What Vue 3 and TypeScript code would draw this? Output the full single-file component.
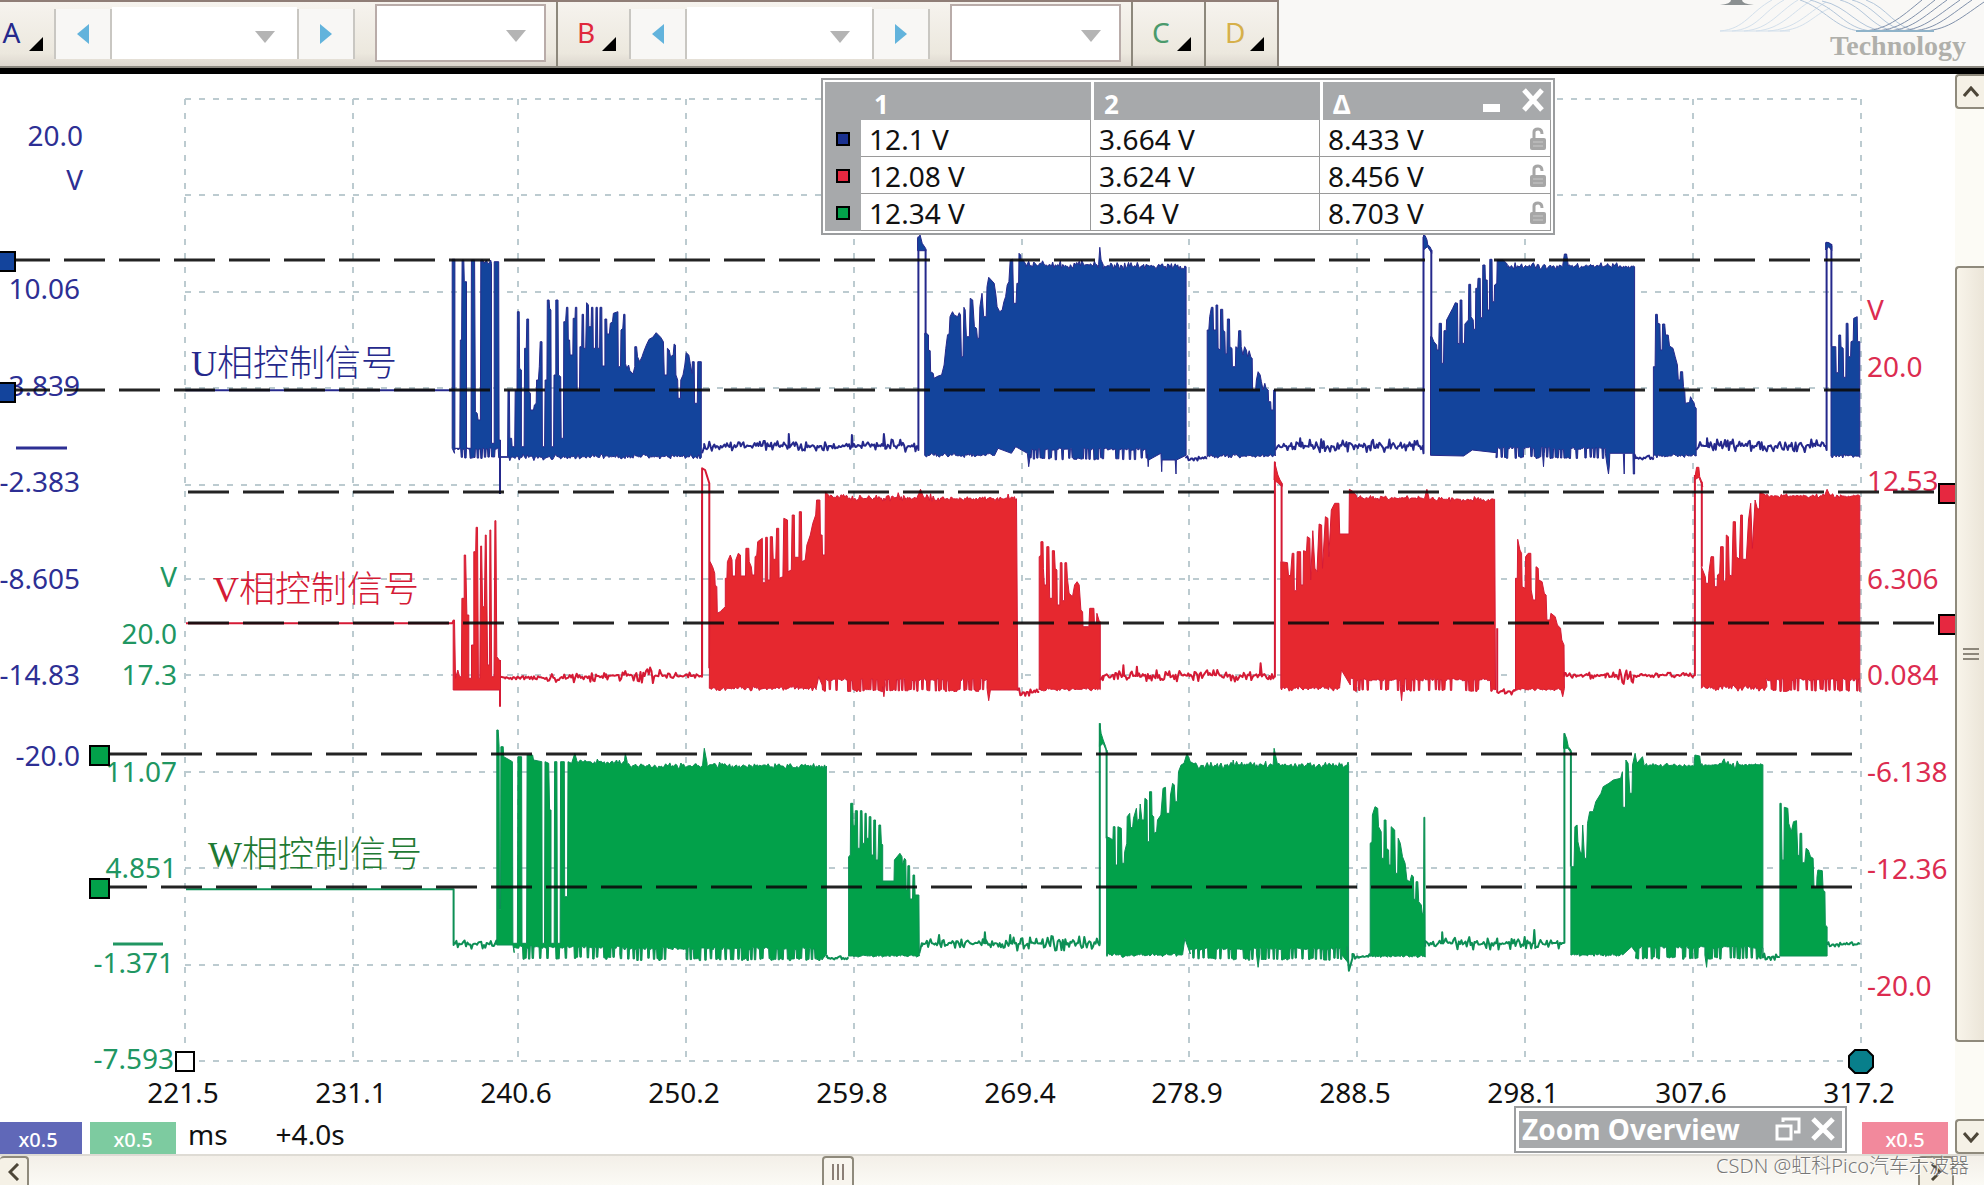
<script setup lang="ts">
type Frame = { x: number; y: number; k: number }
type Piece = { frame: Frame; pts: string; line?: boolean }
type Channel = { name: string; color: string; edge: string; pieces: Piece[] }

/* Capture windows: origin on the plot and horizontal samples per plot unit.
   Vertical resolution is 3 samples per unit in every window. */
const early: Frame = { x: 0, y: 220, k: 2.24 }
const earlyLow: Frame = { x: 0, y: 500, k: 2.178 }
const mid: Frame = { x: 700, y: 220, k: 2.376 }
const midLow: Frame = { x: 700, y: 700, k: 2.376 }
const late: Frame = { x: 1300, y: 220, k: 2.292 }
const lateLow: Frame = { x: 1300, y: 700, k: 2.292 }

function rng(seed: number): () => number {
  let s = seed
  return () => {
    s = (s * 16807) % 2147483647
    return s / 2147483647
  }
}

/* "x,y" is a plain vertex; "x,y,a" is a noisy run up to x, around y, with amplitude a. */
function toPath(piece: Piece): string {
  const { frame, pts, line } = piece
  const out: string[] = []
  const rand = rng(pts.length * 7919 + 13)
  const put = (px: number, py: number) => {
    const x = Math.round((frame.x + px / frame.k) * 10) / 10
    const y = Math.round((frame.y + py / 3) * 10) / 10
    out.push(`${x} ${y}`)
  }
  let lastX = 0
  for (const token of pts.trim().split(/\s+/)) {
    const [x, y, amp] = token.split(',').map(Number)
    if (amp === undefined) {
      put(x, y)
    } else {
      const dir = x > lastX ? 1 : -1
      const step = amp >= 15 ? 4 : 3
      let high = false
      for (let cx = lastX; dir * (x - cx) > 0; cx += dir * step) {
        if (amp >= 15) {
          if (rand() > 0.45) high = !high
          const py = y + (high ? -amp : amp) * (0.7 + rand() * 0.4)
          put(cx, py)
          put(cx + dir * (step - 1), py)
        } else {
          const r = rand() * 2 - 1
          put(cx, y + r * Math.abs(r) * amp * 1.7)
        }
      }
      put(x, y)
    }
    lastX = x
  }
  return 'M' + out.join('L') + (line ? '' : 'Z')
}

const channels: Channel[] = [
  {
    name: 'U', color: '#13449c', edge: '#25298c',
    pieces: [
      { frame: early, line: true, pts: '415,511 1015,511' },
      { frame: early, line: true, pts: '1120,660 1120,822' },
      { frame: early, pts: '1013,685 1013,118 1019,118 1019,685 1030,685 1031,360 1034,360 1035,120 1039,120 1040,185 1045,185 1045,685 1055,685 1056,120 1063,120 1065,575 1069,580 1071,600 1076,600 1077,120 1082,120 1084,130 1090,120 1092,130 1096,130 1099,120 1101,130 1101,670 1107,670 1107,125 1117,125 1118,660 1121,660 1121,710 1137,710 1138,512 1141,512 1142,655 1146,655 1147,680 1153,680 1154,512 1158,512 1159,275 1163,275 1164,445 1168,450 1168,680 1174,680 1175,385 1179,385 1180,297 1184,297 1185,515 1188,520 1188,570 1195,570 1197,555 1201,550 1202,480 1206,480 1208,440 1210,365 1214,365 1215,680 1220,680 1221,480 1225,480 1226,240 1230,240 1231,265 1234,270 1235,680 1240,680 1241,465 1245,465 1245,240 1250,240 1251,465 1256,470 1257,655 1262,655 1263,305 1267,305 1269,262 1272,262 1273,360 1276,360 1277,405 1283,405 1284,295 1288,295 1289,262 1292,262 1293,510 1298,510 1299,380 1303,380 1304,283 1307,283 1308,385 1312,385 1314,248 1318,255 1319,320 1324,320 1325,262 1328,262 1329,385 1334,385 1335,262 1338,262 1339,385 1343,385 1344,262 1348,262 1349,438 1355,438 1355,297 1359,297 1360,342 1365,342 1367,310 1372,305 1374,280 1384,275 1385,440 1390,440 1391,330 1395,325 1397,283 1400,283 1401,430 1404,445 1408,435 1411,452 1418,462 1422,440 1422,380 1426,380 1428,410 1433,425 1438,410 1442,395 1448,375 1454,358 1462,352 1470,338 1480,352 1486,365 1488,465 1494,465 1495,385 1499,390 1502,410 1508,405 1510,372 1513,375 1514,465 1518,480 1519,535 1524,535 1525,480 1530,465 1534,435 1537,398 1543,405 1546,430 1550,460 1551,425 1555,425 1556,550 1562,550 1563,425 1571,425 1571,708 1265,710,5 1140,712,6 1120,712 1018,700,15' },
      { frame: mid, line: true, pts: '5,700 10,680 210,678,9 211,642 213,678 360,678,8 361,645 363,680 435,678,8 437,642 440,680 518,678,13 519,690 519,50' },
      { frame: mid, pts: '517,92 517,55 523,45 528,70 536,85 537,92' },
      { frame: mid, line: true, pts: '536,88 536,345' },
      { frame: mid, pts: '534,706 534,340 538,340 543,345 543,390 547,392 548,455 554,460 556,475 566,468 574,465 580,435 584,385 588,345 592,340 594,290 600,275 604,285 612,290 616,278 619,285 621,410 625,410 627,262 630,270 633,350 640,350 642,235 648,240 652,320 657,325 659,355 663,355 665,260 670,220 674,290 680,290 682,200 686,172 692,180 699,190 703,225 706,260 712,275 718,270 722,245 726,230 730,195 734,185 737,120 743,118 745,250 751,250 753,190 757,190 758,100 762,105 763,120 768,120 775,135 947,134,8 950,82 953,120 958,134 1152,138,7 1155,140 1155,706 1132,720 1131,762 1129,720 1098,720 1097,755 1095,700 1066,720 1065,740 1063,702 785,702,16 781,740 778,700 750,680 740,700 708,685 700,706 534,706,4' },
      { frame: mid, line: true, pts: '1155,715 1205,715,4' },
      { frame: mid, pts: '1205,710 1205,330 1209,330 1211,290 1215,262 1219,262 1220,330 1226,330 1226,255 1230,255 1231,385 1236,390 1237,268 1242,268 1243,330 1247,335 1248,400 1252,402 1253,297 1258,297 1259,380 1264,385 1265,440 1272,440 1273,380 1278,385 1280,332 1285,332 1286,380 1290,405 1294,380 1298,390 1301,410 1305,392 1309,412 1312,415 1313,508 1320,510 1322,480 1326,455 1331,465 1334,485 1338,510 1342,490 1345,505 1350,510 1351,545 1356,545 1357,570 1362,570 1363,510 1367,510 1367,708 1205,708,4' },
      { frame: mid, line: true, pts: '1367,690 1372,680 1424,678,9 1426,655 1428,680 1717,678,12 1719,700 1719,50' },
      { frame: late, pts: '283,90 283,45 287,47 291,60 293,75 298,80 302,92 302,100 292,80' },
      { frame: late, line: true, pts: '301,90 301,360' },
      { frame: late, pts: '299,706 299,350 302,350 307,365 313,375 314,390 318,390 319,310 324,310 325,430 329,430 330,332 335,332 336,300 342,285 350,265 356,248 361,250 362,370 366,372 367,240 371,240 372,370 377,370 378,312 386,300 387,193 391,193 392,290 397,300 398,328 402,328 403,205 407,205 408,175 413,175 414,293 418,293 419,135 424,135 425,180 429,180 430,270 434,270 435,118 440,118 441,245 445,245 446,195 451,190 452,120 466,120 475,132 602,137,7 606,102 611,102 615,137 764,138,6 767,140 767,762 764,762 763,700 744,700 743,762 741,700 710,700 709,738 707,762 704,738 700,700 560,700,16 558,740 556,705 450,698,16 395,690 375,708 299,706' },
      { frame: late, line: true, pts: '767,718 810,712,6' },
      { frame: late, pts: '810,710 810,440 814,440 815,283 819,283 820,310 825,312 826,390 830,390 831,312 836,312 838,345 844,345 847,378 855,385 860,410 865,435 867,480 871,480 872,455 877,455 879,500 882,515 883,550 890,548 893,545 895,530 899,540 903,548 905,560 908,565 908,708 810,708,4' },
      { frame: late, line: true, pts: '908,690 914,680 932,678,9 933,655 935,680 1205,678,12 1207,690 1207,68 1218,75 1218,380' },
      { frame: late, pts: '1205,90 1205,68 1213,68 1219,78 1219,92 1212,80' },
      { frame: late, pts: '1217,708 1217,380 1228,380 1229,458 1234,458 1235,345 1239,345 1240,380 1245,385 1246,472 1251,472 1252,310 1256,310 1257,410 1262,410 1263,365 1268,362 1269,295 1277,290 1278,365 1283,365 1283,710 1217,708,4' },
    ],
  },
  {
    name: 'V', color: '#e6282f', edge: '#d51a35',
    pieces: [
      { frame: earlyLow, line: true, pts: '405,370 985,370 988,362' },
      { frame: earlyLow, line: true, pts: '1089,480 1089,620' },
      { frame: earlyLow, pts: '987,570 987,360 990,360 992,535 997,510 1001,530 1005,530 1006,295 1011,295 1011,165 1014,165 1017,345 1021,345 1021,535 1027,535 1027,435 1032,435 1032,155 1036,155 1037,82 1040,82 1042,535 1045,535 1047,138 1049,138 1051,320 1055,320 1057,105 1059,105 1062,495 1066,495 1067,90 1069,90 1071,530 1076,530 1078,62 1080,62 1082,470 1090,485 1090,570' },
      { frame: earlyLow, line: true, pts: '1090,530 1100,533 1190,533,3 1320,532,9 1460,526,14 1528,528,6 1529,530 1529,0' },
      { frame: mid, line: true, pts: '5,1365 5,745 12,750 22,790 22,1345' },
      { frame: mid, pts: '22,1405 24,1025 30,1040 35,1060 36,1095 40,1100 41,1180 48,1175 56,1165 60,1160 60,1075 64,1075 65,1025 72,1005 76,1020 77,1068 84,1068 85,1020 91,1000 96,1005 97,1068 108,1068 109,985 116,985 117,1025 122,1040 124,1065 130,1065 131,1010 135,1005 137,965 148,955 149,1088 155,1088 156,952 160,952 161,1080 166,1080 167,950 172,950 174,1018 180,1018 182,925 187,925 188,1075 197,1070 199,895 208,900 209,1055 217,1050 219,885 224,885 225,1012 235,1012 236,875 241,875 242,1025 250,1020 254,975 262,945 268,910 275,885 277,840 285,840 286,945 290,945 291,1005 297,1005 298,815 305,825 350,828,5 468,834,6 471,818 475,834 515,834,6 520,820 524,808 530,828 575,834,8 730,836,4 732,822 735,836 752,836,4 755,1410 690,1410 686,1442 682,1405 440,1395,18 437,1430 434,1400 290,1395,18 282,1370 276,1405 24,1405,5' },
      { frame: mid, line: true, pts: '755,1412 806,1416,7' },
      { frame: mid, pts: '806,1410 806,1010 810,1005 810,965 815,965 816,1045 818,1095 823,1095 824,980 829,980 831,1135 837,1135 837,992 842,992 844,1045 848,1050 849,1155 855,1155 856,1028 860,1028 861,1142 866,1142 867,1028 871,1028 873,1075 877,1120 885,1130 890,1095 896,1085 901,1095 905,1170 909,1175 910,1220 924,1220 926,1165 936,1165 937,1210 942,1210 943,1180 949,1205 951,1205 951,1408 806,1408,3' },
      { frame: mid, line: true, pts: '951,1380 957,1368 1004,1366,9 1006,1336 1008,1368 1036,1368,9 1038,1340 1040,1368 1330,1366,11 1332,1330 1335,1368 1365,1368,6 1366,1370 1366,725' },
      { frame: mid, pts: '1364,780 1365,725 1368,740 1373,765 1378,780 1383,790 1383,800 1374,790' },
      { frame: mid, line: true, pts: '1382,790 1382,1025' },
      { frame: mid, pts: '1380,1405 1380,1025 1396,1028 1398,1065 1403,1068 1407,1000 1411,1000 1412,1112 1417,1112 1419,995 1427,995 1428,1095 1433,1095 1434,992 1441,995 1443,950 1449,955 1451,1080 1456,932 1461,1045 1466,1055 1471,912 1477,915 1479,1045 1486,890 1492,895 1494,1010 1500,870 1508,850 1518,850 1520,942 1542,942 1543,808 1552,815 1560,828 1722,834,5 1727,808 1732,834 1888,838,5 1890,1410 1670,1395,18 1667,1442 1664,1400 1545,1395,18 1524,1350 1520,1400 1380,1405,5' },
      { frame: late, line: true, pts: '452,1225 452,1412 494,1414,6' },
      { frame: late, pts: '494,1410 494,1075 498,1075 499,958 504,990 508,1000 509,1100 516,1105 517,1010 523,1000 529,1000 530,1110 534,1140 540,1140 541,1040 546,1045 547,1080 555,1085 560,1120 564,1125 566,1200 573,1200 575,1180 585,1190 590,1215 597,1225 600,1260 605,1275 606,1405 602,1430 598,1408 494,1408,3' },
      { frame: late, line: true, pts: '606,1370 700,1366,6 765,1370,14 905,1366,5 905,765' },
      { frame: late, pts: '904,780 906,765 909,742 914,742 916,770 920,782 923,800 914,772' },
      { frame: late, line: true, pts: '921,785 921,1040' },
      { frame: late, pts: '920,1405 920,1040 929,1070 930,1090 936,1090 937,1060 942,1010 948,1010 950,1100 956,1100 957,1065 962,1060 964,980 970,980 971,1085 976,1080 977,945 982,950 984,1065 990,1068 993,905 998,905 1000,1010 1007,1018 1010,885 1014,885 1015,1018 1023,1018 1028,900 1033,850 1037,985 1043,840 1048,865 1053,868 1054,818 1060,820 1070,828 1202,828,4 1208,808 1215,828 1283,828,4 1283,1415 1070,1395,18 920,1405,6' },
    ],
  },
  {
    name: 'W', color: '#02a14a', edge: '#0d8f55',
    pieces: [
      { frame: earlyLow, line: true, pts: '405,1168 988,1168 988,1335 1082,1333,9' },
      { frame: earlyLow, pts: '1082,1335 1082,690 1085,690 1087,740 1088,1228 1090,1228 1091,740 1096,740 1097,770 1110,780 1116,785 1117,1330 1127,1330 1128,770 1136,770 1137,1330 1147,1330 1148,765 1160,765 1162,780 1180,785 1181,1330 1186,1330 1187,785 1195,790 1197,930 1200,930 1200,1330 1207,1330 1208,785 1213,785 1214,1330 1220,1330 1221,785 1229,785 1230,1190 1236,1190 1237,785 1245,790 1252,760 1256,780 1360,785,5 1362,760 1366,785 1530,797,5 1534,745 1540,790 1580,794,6 1800,798,5 1800,1362 1790,1380 1350,1362,18 1120,1358,18 1117,1335' },
      { frame: midLow, line: true, pts: '301,773 353,773,5' },
      { frame: midLow, pts: '353,768 353,470 357,465 358,310 363,310 364,375 368,378 369,332 374,332 375,445 380,445 381,332 385,332 386,430 391,430 392,340 395,340 396,415 401,415 402,350 406,350 407,465 412,465 413,360 417,360 418,480 423,480 425,375 429,375 431,430 434,435 434,543 461,543 462,480 475,460 480,470 481,495 486,475 489,480 490,570 493,570 494,497 498,497 499,597 505,597 506,525 510,525 511,585 520,585 521,768 353,768,2' },
      { frame: midLow, line: true, pts: '521,760 527,730 565,730,8 568,705 570,730 675,730,8 677,697 679,730 735,730,8 737,705 739,730 950,730,13 950,70' },
      { frame: midLow, pts: '949,140 950,70 953,100 958,120 964,140 968,160 958,130' },
      { frame: midLow, line: true, pts: '966,150 966,415' },
      { frame: midLow, pts: '966,765 966,410 975,415 981,420 982,380 986,380 987,495 992,495 993,380 1001,385 1003,490 1008,490 1009,455 1014,430 1015,350 1021,340 1023,385 1028,380 1030,355 1037,325 1039,365 1044,355 1046,312 1050,360 1055,360 1057,295 1062,300 1063,425 1068,425 1068,275 1073,275 1074,345 1078,350 1079,400 1085,395 1087,360 1095,345 1100,265 1106,262 1108,340 1116,340 1118,285 1123,250 1127,255 1129,305 1134,305 1137,215 1143,195 1150,190 1157,160 1165,185 1175,192 1265,196,6 1267,180 1269,196 1362,194,7 1364,145 1372,192 1541,196,6 1541,790 1525,765 1330,762,17 1326,802 1322,762 1165,762,17 1152,715 1147,762 966,765,4' },
      { frame: lateLow, line: true, pts: '108,740 112,812 120,775 160,770,6' },
      { frame: lateLow, pts: '161,768 161,430 165,425 166,345 172,320 178,325 180,380 186,395 187,475 192,475 193,360 197,360 198,445 203,450 204,495 208,495 209,380 217,390 219,520 224,520 225,415 230,430 235,470 241,490 245,540 252,545 256,525 260,530 261,598 265,598 266,545 270,545 272,605 278,615 280,640 283,640 284,352 286,352 287,768 161,768,3' },
      { frame: lateLow, line: true, pts: '287,740 325,730,6 326,697 328,730 440,730,12 535,730,12 537,690 539,730 600,730,10 606,728 606,100' },
      { frame: lateLow, pts: '604,145 606,100 611,115 615,140 621,150 623,162 614,145' },
      { frame: lateLow, line: true, pts: '621,155 621,500' },
      { frame: lateLow, pts: '621,765 621,500 628,500 630,380 635,375 637,425 642,455 646,460 648,375 652,475 657,475 659,370 664,335 672,335 678,305 690,280 695,260 708,250 718,240 735,235 739,215 740,322 746,322 747,180 752,190 756,280 761,280 762,195 768,160 772,190 785,170 788,190 903,196,4 905,165 916,168 918,190 960,194,3 1005,192,10 1061,194,3 1061,775 935,758,18 932,802 928,765 770,758,18 760,740 740,764 621,765,3' },
      { frame: lateLow, line: true, pts: '1061,774 1100,770,6' },
      { frame: lateLow, pts: '1100,768 1100,310 1103,310 1105,480 1109,480 1110,322 1118,325 1120,370 1126,395 1131,365 1138,362 1141,465 1145,468 1146,400 1150,400 1151,488 1157,488 1160,445 1165,450 1170,470 1176,475 1178,560 1184,565 1185,530 1187,510 1197,512 1199,570 1203,575 1204,675 1208,680 1208,768' },
      { frame: lateLow, line: true, pts: '1208,735 1283,733,4' },
    ],
  },
]

const waves = channels.map((c) => ({
  name: c.name, color: c.color, edge: c.edge,
  paths: c.pieces.map((p) => ({ d: toPath(p), line: !!p.line })),
}))

const gridX = [185, 353, 518, 686, 854, 1022, 1189, 1357, 1525, 1693, 1861]
const gridY = [99, 195, 292, 388, 485, 579, 675, 772, 868, 965, 1061]
const ticks = [221.5, 231.1, 240.6, 250.2, 259.8, 269.4, 278.9, 288.5, 298.1, 307.6, 317.2]

const cursors = [
  { x1: 9, x2: 1860, y: 260 }, { x1: 9, x2: 1860, y: 390 },
  { x1: 188, x2: 1939, y: 492 }, { x1: 188, x2: 1939, y: 623 },
  { x1: 106, x2: 1860, y: 754 }, { x1: 106, x2: 1860, y: 887 },
]
const handles = [
  { x: -4, y: 252, c: '#13449c' }, { x: -4, y: 383, c: '#13449c' },
  { x: 1939, y: 484, c: '#e62840' }, { x: 1939, y: 615, c: '#e62840' },
  { x: 90, y: 746, c: '#02a14a' }, { x: 90, y: 879, c: '#02a14a' },
]

const blueAxis = [
  { x: 83, y: 146, t: '20.0' }, { x: 83, y: 190, t: 'V' }, { x: 80, y: 299, t: '10.06' },
  { x: 80, y: 396, t: '3.839' }, { x: 80, y: 492, t: '-2.383' }, { x: 80, y: 589, t: '-8.605' },
  { x: 80, y: 685, t: '-14.83' }, { x: 80, y: 766, t: '-20.0' },
]
const greenAxis = [
  { x: 177, y: 587, t: 'V' }, { x: 177, y: 644, t: '20.0' }, { x: 177, y: 685, t: '17.3' },
  { x: 177, y: 782, t: '11.07' }, { x: 177, y: 878, t: '4.851' }, { x: 174, y: 973, t: '-1.371' },
  { x: 174, y: 1069, t: '-7.593' },
]
const redAxis = [
  { y: 320, t: 'V' }, { y: 377, t: '20.0' }, { y: 491, t: '12.53' }, { y: 589, t: '6.306' },
  { y: 685, t: '0.084' }, { y: 782, t: '-6.138' }, { y: 879, t: '-12.36' }, { y: 996, t: '-20.0' },
]
const phases = [
  { x: 191, y: 376, c: '#25298c', t: 'U相控制信号' },
  { x: 213, y: 602, c: '#d51a35', t: 'V相控制信号' },
  { x: 208, y: 867, c: '#1f7a33', t: 'W相控制信号' },
]

const rows = [
  { c: '#1a3190', name: 'A', v: ['12.1 V', '3.664 V', '8.433 V'] },
  { c: '#e62840', name: 'B', v: ['12.08 V', '3.624 V', '8.456 V'] },
  { c: '#02a14a', name: 'C', v: ['12.34 V', '3.64 V', '8.703 V'] },
]

const inputs = [
  { id: 'A', c: '#25298c', open: true },
  { id: 'B', c: '#e0283c', open: true },
  { id: 'C', c: '#4a9a6c', open: false },
  { id: 'D', c: '#d6b04a', open: false },
]
</script>

<template>
  <div class="scope">
    <header class="top">
      <div class="toolbar">
        <div v-for="ch in inputs" :key="ch.id" class="group">
          <button class="channel" :class="{ cut: ch.id === 'A' }" :style="{ color: ch.c }">
            <span>{{ ch.id }}</span>
            <svg width="14" height="14" viewBox="0 0 14 14"><path d="M14 0V14H0Z" fill="#000" /></svg>
          </button>
          <template v-if="ch.open">
            <button class="step" aria-label="Previous range">
              <svg width="12" height="20" viewBox="0 0 12 20"><path d="M12 0V20L0 10Z" fill="#62b3dc" /></svg>
            </button>
            <label class="pick range">
              <select :aria-label="'Range ' + ch.id"></select>
              <svg width="20" height="12" viewBox="0 0 20 12"><path d="M0 0H20L10 12Z" fill="#b4b4b4" /></svg>
            </label>
            <button class="step" aria-label="Next range">
              <svg width="12" height="20" viewBox="0 0 12 20"><path d="M0 0V20L12 10Z" fill="#62b3dc" /></svg>
            </button>
            <label class="pick coupling">
              <select :aria-label="'Coupling ' + ch.id"></select>
              <svg width="20" height="12" viewBox="0 0 20 12"><path d="M0 0H20L10 12Z" fill="#b4b4b4" /></svg>
            </label>
          </template>
        </div>
      </div>
      <div class="brand">
        <svg class="strands" width="284" height="66" viewBox="0 0 284 66" fill="none">
          <path d="M20 5Q31 4 31 0H42Q42 4 54 5Z" fill="#8b9091" />
          <g stroke="#d3e0ec" stroke-width="1">
            <path d="M20 31C45 29 50 12 72 0" /><path d="M32 31C58 29 62 12 84 0" /><path d="M44 31C70 29 78 12 98 0" />
            <path d="M56 31C82 29 92 12 112 0" /><path d="M68 31C96 29 106 14 126 2" /><path d="M80 31C106 29 112 16 130 8" />
            <path d="M20 31H90" />
          </g>
          <g stroke="#b3c6da" stroke-width="1">
            <path d="M100 0C124 8 136 29 160 31" /><path d="M110 0C136 6 144 29 172 31" /><path d="M122 1C148 6 158 29 184 31" />
            <path d="M140 0C164 6 172 29 196 31" /><path d="M152 0C176 6 184 29 208 31" /><path d="M166 0C188 8 194 28 218 31" />
          </g>
          <g stroke="#8191ab" stroke-width="1">
            <path d="M160 31C186 31 200 18 222 0" /><path d="M172 31C198 31 212 18 235 0" /><path d="M184 31C210 31 222 18 247 0" />
            <path d="M196 31C222 31 234 18 260 0" /><path d="M208 31C234 31 246 18 272 0" /><path d="M220 31C246 31 258 20 284 2" />
            <path d="M156 31H234" stroke="#8fb3c9" stroke-width="2" />
          </g>
        </svg>
        <span class="tech">Technology</span>
      </div>
    </header>

    <div class="body">
      <main class="view">
        <svg class="plot" viewBox="0 74 1955 1044">
          <g class="grid">
            <line v-for="x in gridX" :key="'x' + x" :x1="x" :x2="x" y1="99" y2="1061" />
            <line v-for="y in gridY" :key="'y' + y" x1="185" x2="1861" :y1="y" :y2="y" />
          </g>
          <g class="axis">
            <text v-for="l in blueAxis" :key="l.t" :x="l.x" :y="l.y" text-anchor="end" fill="#2d2f94">{{ l.t }}</text>
            <text v-for="l in greenAxis" :key="l.t" :x="l.x" :y="l.y" text-anchor="end" fill="#209662">{{ l.t }}</text>
            <text v-for="l in redAxis" :key="l.t" x="1867" :y="l.y" fill="#dc2c50">{{ l.t }}</text>
            <text v-for="(t, i) in ticks" :key="t" :x="gridX[i] - 2" y="1103" text-anchor="middle" fill="#111">{{ t.toFixed(1) }}</text>
          </g>
          <path d="M16 448H67" stroke="#2d2f94" stroke-width="3" />
          <path d="M113 944H163" stroke="#209662" stroke-width="3" />
          <g v-for="w in waves" :key="w.name" stroke-linejoin="round">
            <path
              v-for="(p, i) in w.paths" :key="i" :d="p.d" :fill="p.line ? 'none' : w.color"
              :stroke="w.edge" :stroke-width="p.line ? 2 : 1"
            />
          </g>
          <g class="cursors">
            <line v-for="c in cursors" :key="c.y" :x1="c.x1" :x2="c.x2" :y1="c.y" :y2="c.y" />
          </g>
          <rect v-for="h in handles" :key="h.y" :x="h.x" :y="h.y" width="19" height="19" :fill="h.c" stroke="#000" stroke-width="2" />
          <rect x="176" y="1052" width="18" height="19" fill="#fff" stroke="#000" stroke-width="2" />
          <path d="M1855 1050H1867L1873 1056V1067L1867 1073H1855L1849 1067V1056Z" fill="#087f8b" stroke="#000" stroke-width="2" />
          <g class="phase">
            <text v-for="p in phases" :key="p.t" :x="p.x" :y="p.y" :fill="p.c">{{ p.t }}</text>
          </g>
        </svg>

        <div class="status">
          <button class="scale blue">x0.5</button>
          <button class="scale green">x0.5</button>
          <span class="unit">ms</span>
          <span>+4.0s</span>
          <button class="scale red">x0.5</button>
        </div>

        <section class="measure">
          <table>
            <colgroup><col class="c0" /><col class="c1" /><col class="c2" /><col /></colgroup>
            <thead>
              <tr>
                <th></th>
                <th class="first">1</th>
                <th class="sep">2</th>
                <th class="sep">
                  <div class="delta">
                    <span>Δ</span>
                    <button class="min" aria-label="Minimise"><svg width="17" height="8" viewBox="0 0 17 8"><rect width="17" height="8" fill="#fff" /></svg></button>
                    <button aria-label="Close"><svg width="24" height="24" viewBox="0 0 24 24"><path d="M3 2L21 22M21 2L3 22" stroke="#fff" stroke-width="5" /></svg></button>
                  </div>
                </th>
              </tr>
            </thead>
            <tbody>
              <tr v-for="r in rows" :key="r.name">
                <th :aria-label="'Channel ' + r.name"><i class="swatch" :style="{ background: r.c }"></i></th>
                <td>{{ r.v[0] }}</td>
                <td>{{ r.v[1] }}</td>
                <td>
                  <div class="locked">
                    <span>{{ r.v[2] }}</span>
                    <svg width="16" height="24" viewBox="0 0 16 24" fill="none" stroke="#a6a6a6">
                      <path d="M4 12V5Q4 2 8 2Q12 2 12 7" stroke-width="3" />
                      <rect x="0" y="11" width="16" height="12" rx="2" fill="#a6a6a6" stroke="none" />
                      <path d="M3 15H13M3 19H13" stroke="#c8c8c8" stroke-width="1" />
                    </svg>
                  </div>
                </td>
              </tr>
            </tbody>
          </table>
        </section>

        <section class="overview">
          <strong>Zoom Overview</strong>
          <button aria-label="Restore">
            <svg width="26" height="24" viewBox="0 0 26 24" fill="none" stroke="#fff" stroke-width="3">
              <path d="M2 9H16V22H2Z" /><path d="M8 5V2H24V15H19" />
            </svg>
          </button>
          <button aria-label="Close overview">
            <svg width="24" height="24" viewBox="0 0 24 24"><path d="M2 2L22 22M22 2L2 22" stroke="#fff" stroke-width="5" /></svg>
          </button>
        </section>
      </main>

      <div class="vbar">
        <button class="arrow" aria-label="Scroll up">
          <svg width="16" height="12" viewBox="0 0 16 12" fill="none"><path d="M1 10L8 2L15 10" stroke="#4d4638" stroke-width="3" /></svg>
        </button>
        <div class="vtrack">
          <div class="vthumb"><i></i><i></i><i></i></div>
        </div>
        <button class="arrow" aria-label="Scroll down">
          <svg width="16" height="12" viewBox="0 0 16 12" fill="none"><path d="M1 2L8 10L15 2" stroke="#4d4638" stroke-width="3" /></svg>
        </button>
      </div>
    </div>

    <footer class="hbar">
      <button class="arrow left" aria-label="Scroll left">
        <svg width="12" height="18" viewBox="0 0 12 18" fill="none"><path d="M10 1L2 9L10 17" stroke="#4d4638" stroke-width="3" /></svg>
      </button>
      <div class="htrack">
        <div class="hthumb"><i></i><i></i><i></i></div>
      </div>
      <button class="arrow right" aria-label="Scroll right">
        <svg width="12" height="18" viewBox="0 0 12 18" fill="none"><path d="M2 1L10 9L2 17" stroke="#4d4638" stroke-width="3" /></svg>
      </button>
      <span class="credit">CSDN @虹科Pico汽车示波器</span>
    </footer>
  </div>
</template>

<style>
body {
  margin: 0;
  background: #fff;
}
</style>

<style scoped>
.scope {
  display: flex;
  flex-direction: column;
  min-height: 100vh;
  position: relative;
  overflow: hidden;
  background: #fff;
  color: #111;
  font-family: "Noto Sans", "Noto Sans CJK SC", sans-serif;
  font-size: 28px;
  line-height: 32px;
}
button {
  border: 0;
  padding: 0;
  background: none;
  font: inherit;
  display: flex;
  align-items: center;
  justify-content: center;
}
.top {
  display: flex;
  height: 68px;
  box-sizing: border-box;
  border-bottom: 2px solid #8b8880;
  background: #f9f8f6;
  overflow: hidden;
}
.toolbar {
  display: flex;
  box-sizing: border-box;
  border-top: 2px solid #8f7d76;
  border-right: 2px solid #8d857c;
  background: linear-gradient(#f6f3ee, #ece8de 80%, #ddd7cf);
}
.group {
  display: flex;
  align-items: flex-start;
  border-right: 2px solid #8d887c;
}
.group:last-child {
  border-right: 0;
}
.channel {
  box-sizing: border-box;
  width: 71px;
  height: 62px;
  padding-left: 19px;
  align-items: flex-start;
  justify-content: flex-start;
  gap: 8px;
}
.channel span {
  width: 17px;
  padding-top: 14px;
}
.channel svg {
  margin-top: 35px;
}
.channel.cut {
  width: 54px;
  padding-left: 2px;
}
.channel.cut span {
  width: 19px;
}
.step {
  width: 58px;
  height: 50px;
  margin-top: 7px;
  box-sizing: border-box;
  border-left: 2px solid #c9c7c2;
  border-right: 2px solid #c9c7c2;
  background: #f8f7f5;
}
.pick {
  position: relative;
  display: block;
}
.pick select {
  appearance: none;
  display: block;
  width: 100%;
  height: 100%;
  border: 0;
  background: #fff;
}
.pick svg {
  position: absolute;
  right: 22px;
  top: 24px;
}
.range {
  width: 185px;
  height: 52px;
  margin-top: 5px;
}
.coupling {
  box-sizing: border-box;
  width: 171px;
  height: 58px;
  margin: 2px 10px 0 20px;
  border: 2px solid #b9aca9;
}
.coupling svg {
  right: 18px;
}
.brand {
  flex: 1;
  position: relative;
}
.strands {
  position: absolute;
  right: 0;
  top: 0;
}
.tech {
  position: absolute;
  right: 18px;
  top: 30px;
  font-family: "Liberation Serif", serif;
  font-size: 28px;
  font-weight: 700;
  line-height: 32px;
  color: #b0b0ab;
}
.body {
  display: flex;
  border-top: 6px solid #000;
}
.view {
  flex: 1;
  min-width: 0;
  position: relative;
}
.plot {
  display: block;
  width: 100%;
}
.grid line {
  stroke: #bccbd0;
  stroke-width: 2;
  stroke-dasharray: 6 8;
}
.cursors line {
  stroke: #0b0b0b;
  stroke-opacity: 0.9;
  stroke-width: 3;
  stroke-dasharray: 41 14;
}
.phase text {
  font-family: "Liberation Serif", "Noto Sans CJK SC", serif;
  font-size: 36px;
  font-weight: 300;
}
.status {
  display: flex;
  align-items: flex-start;
  height: 36px;
}
.scale {
  width: 86px;
  height: 32px;
  margin-top: 4px;
  padding-top: 4px;
  box-sizing: border-box;
  font-size: 20px;
  font-weight: 500;
  color: #fff;
}
.scale.blue {
  width: 82px;
  padding-right: 6px;
  margin-right: 8px;
  background: #6068b8;
}
.scale.green {
  margin-right: 12px;
  background: #7dcba0;
}
.scale.red {
  margin-left: auto;
  margin-right: 7px;
  background: #f2899c;
}
.unit {
  margin-right: 48px;
}
.measure {
  position: absolute;
  left: 42%;
  top: 4px;
  width: 734px;
  box-sizing: border-box;
  border: 2px solid #9b9d9f;
  padding: 2px;
  background: #fff;
}
table {
  width: 100%;
  table-layout: fixed;
  border-collapse: separate;
  border-spacing: 0;
}
.c0 {
  width: 36px;
}
.c1 {
  width: 230px;
}
.c2 {
  width: 229px;
}
th {
  background: #a7a9ab;
  padding: 0;
}
thead th {
  height: 38px;
  box-sizing: border-box;
  padding: 6px 0 0 13px;
  color: #fff;
  text-align: left;
  font-size: 26px;
  line-height: 32px;
}
thead .sep {
  padding-left: 10px;
  border-left: 3px solid #fff;
}
.delta,
.locked {
  display: flex;
  align-items: center;
}
.delta span,
.locked span {
  flex: 1;
}
.delta svg {
  display: block;
}
.delta button {
  width: 24px;
  height: 24px;
  margin: -8px 6px 0 12px;
}
.delta .min {
  align-items: flex-end;
  height: 24px;
}
tbody td {
  height: 34px;
  border-bottom: 1px solid #9a9a9a;
  border-right: 1px solid #9a9a9a;
  padding: 2px 4px 0 8px;
}
.swatch {
  display: block;
  width: 10px;
  height: 10px;
  margin: 0 auto;
  border: 2px solid #000;
}
.overview {
  position: absolute;
  right: 108px;
  bottom: 1px;
  width: 333px;
  height: 47px;
  box-sizing: border-box;
  display: flex;
  align-items: center;
  gap: 10px;
  padding: 0 10px 2px 6px;
  border: 2px solid #9b9d9f;
  box-shadow: inset 0 0 0 3px #fff;
  background: #a7a9ab;
  color: #fff;
}
.overview strong {
  flex: 1;
  white-space: nowrap;
}
.vbar {
  flex: none;
  width: 29px;
  display: flex;
  flex-direction: column;
  background: #fcfbf5;
}
.arrow {
  flex: none;
  height: 35px;
  box-sizing: border-box;
  border: 2px solid #8f8a7c;
  border-right: 0;
  border-radius: 4px 0 0 4px;
  background: #f5f1e6;
}
.vtrack {
  flex: 1;
  display: flex;
  flex-direction: column;
  padding: 157px 0 77px;
}
.vthumb {
  flex: 1;
  display: flex;
  flex-direction: column;
  align-items: center;
  justify-content: center;
  gap: 3px;
  border: 2px solid #8f8a7c;
  border-right: 0;
  border-radius: 4px 0 0 4px;
  background: linear-gradient(90deg, #f8f4ea, #ebe5d8);
}
.vthumb i {
  width: 16px;
  height: 2px;
  background: #8d877b;
}
.hbar {
  position: relative;
  flex: 1;
  min-height: 30px;
  box-sizing: border-box;
  display: flex;
  padding-right: 30px;
  border-top: 2px solid #dedbd4;
  background: linear-gradient(#f3efe8, #fbfaf5);
}
.hbar .arrow {
  width: 36px;
  height: auto;
  border: 2px solid #8f8a7c;
  border-bottom: 0;
  border-radius: 4px 4px 0 0;
}
.hbar .left {
  width: 29px;
  border-left: 0;
}
.htrack {
  flex: 1;
  display: flex;
}
.hthumb {
  width: 32px;
  margin-left: 42%;
  box-sizing: border-box;
  display: flex;
  align-items: center;
  justify-content: center;
  gap: 3px;
  border: 2px solid #8f8a7c;
  border-bottom: 0;
  border-radius: 4px 4px 0 0;
  background: #f8f5ee;
}
.hthumb i {
  width: 2px;
  height: 16px;
  background: #8b7f76;
}
.credit {
  position: absolute;
  right: 15px;
  top: -6px;
  font-size: 20px;
  line-height: 32px;
  font-weight: 300;
  white-space: nowrap;
  color: #777;
  text-shadow: 1px 1px 0 #fff;
}
</style>
